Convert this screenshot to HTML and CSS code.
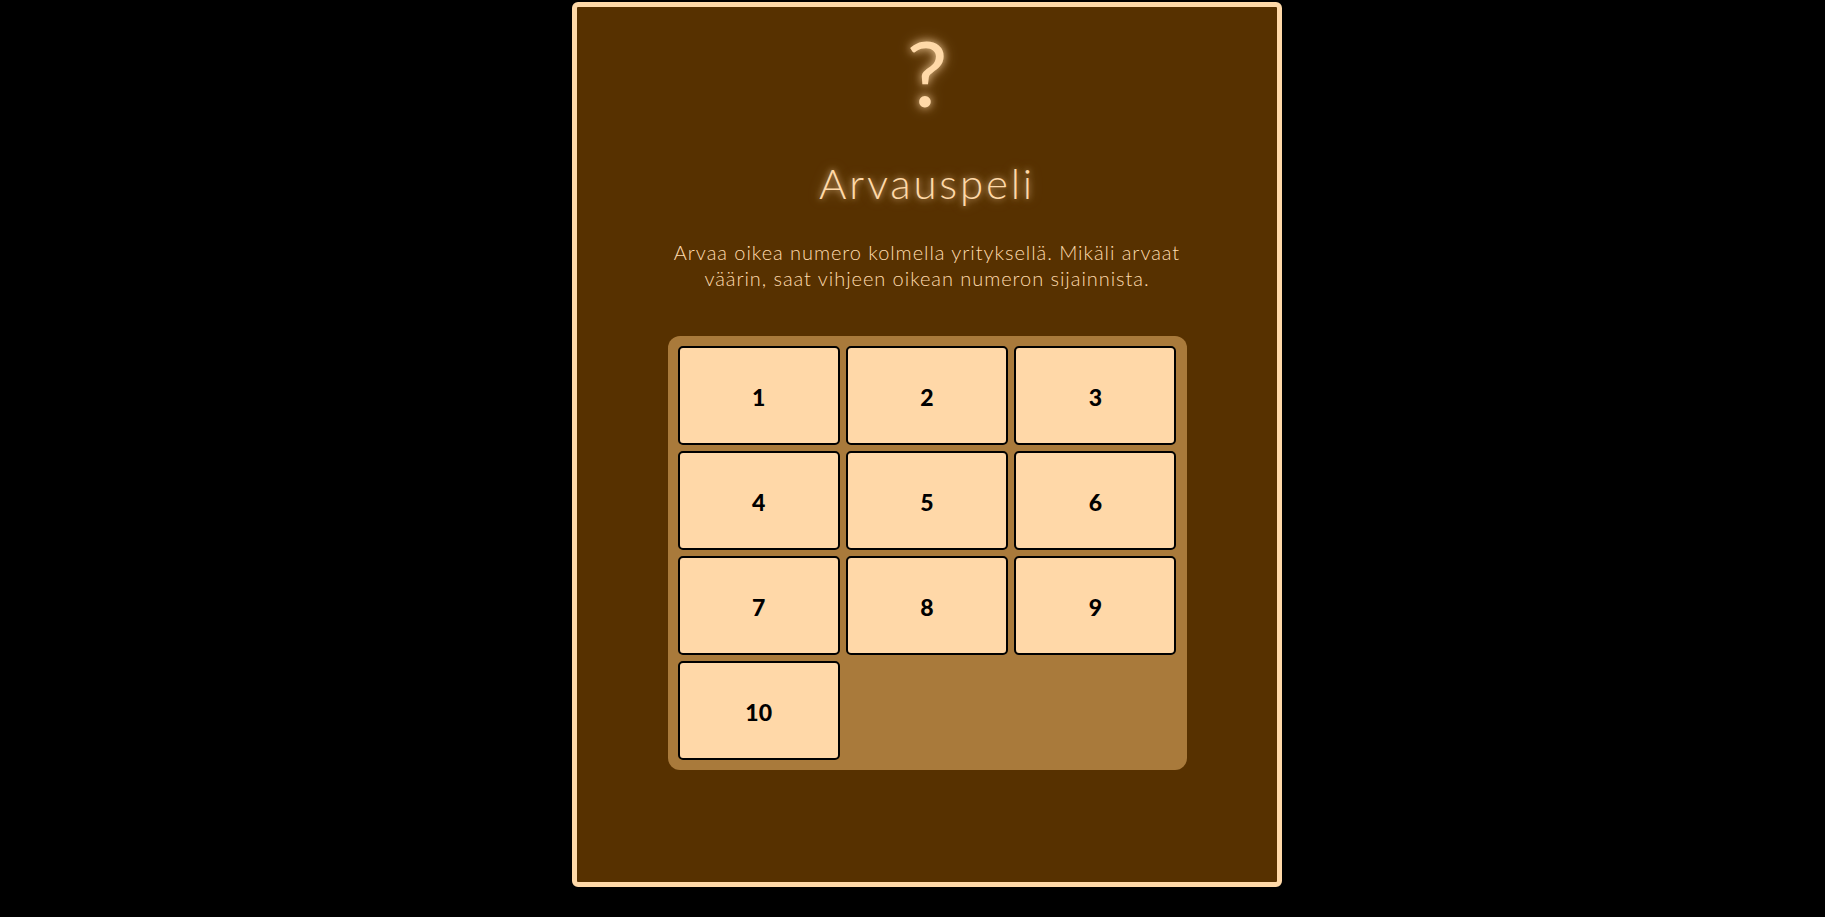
FILE: index.html
```html
<!DOCTYPE html>
<html lang="fi">
<head>
<meta charset="utf-8">
<title>Arvauspeli</title>
<link rel="stylesheet" href="styles.css">
</head>
<body>
<main class="card">
  <div class="mark">?</div>
  <h1 class="title">Arvauspeli</h1>
  <p class="intro">Arvaa oikea numero kolmella yrityksellä. Mikäli arvaat väärin, saat vihjeen oikean numeron sijainnista.</p>
  <div class="board">
    <button class="cell">1</button>
    <button class="cell">2</button>
    <button class="cell">3</button>
    <button class="cell">4</button>
    <button class="cell">5</button>
    <button class="cell">6</button>
    <button class="cell">7</button>
    <button class="cell">8</button>
    <button class="cell">9</button>
    <button class="cell">10</button>
  </div>
</main>
</body>
</html>
```

FILE: styles.css
```css
html, body {
  margin: 0;
  padding: 0;
  background: #000;
  height: 100%;
}
body {
  font-family: "Lato", "Open Sans", sans-serif;
}
.card {
  box-sizing: border-box;
  width: 710px;
  height: 885px;
  margin: 2px 0 0 572px;
  background: #573100;
  border: 5px solid #ffd9a8;
  border-radius: 6px;
  display: flex;
  flex-direction: column;
  align-items: center;
}
.mark {
  margin-top: 10px;
  font-size: 92px;
  line-height: 110px;
  font-weight: 400;
  color: #ffd9a8;
  text-shadow: 0 0 8px rgba(255, 217, 168, 0.85), 0 0 16px rgba(255, 217, 168, 0.4);
}
.title {
  margin: 30px 0 0;
  font-size: 42px;
  line-height: 52px;
  font-weight: 300;
  letter-spacing: 2.8px;
  color: #ffd9a8;
  text-shadow: 0 0 6px rgba(255, 217, 168, 0.7), 0 0 14px rgba(255, 217, 168, 0.35);
}
.intro {
  width: 530px;
  margin: 30px 0 0;
  font-size: 20px;
  line-height: 26px;
  font-weight: 300;
  letter-spacing: 0.95px;
  text-align: center;
  color: #ffdcae;
}
.board {
  box-sizing: border-box;
  width: 519px;
  margin-top: 45px;
  padding: 10px;
  background: #a97a3b;
  border-radius: 12px;
  display: grid;
  grid-template-columns: repeat(3, 1fr);
  grid-auto-rows: 99px;
  gap: 6px;
}
.cell {
  box-sizing: border-box;
  background: #ffd8a8;
  border: 2px solid #000;
  border-radius: 5px;
  font-family: "Lato", sans-serif;
  font-weight: 900;
  font-size: 23px;
  color: #000;
  padding: 2px 0 0;
}
```
